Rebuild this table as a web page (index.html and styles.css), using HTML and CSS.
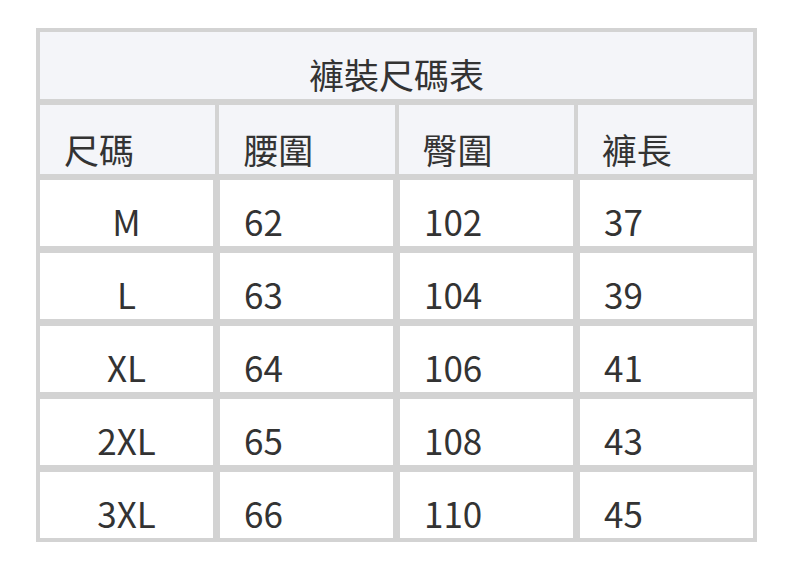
FILE: index.html
```html
<!DOCTYPE html>
<html lang="zh-Hant">
<head>
<meta charset="utf-8">
<title>褲裝尺碼表</title>
<link rel="stylesheet" href="styles.css">
</head>
<body>
<div class="size-table">
  <div class="row title-row"><div class="cell title">褲裝尺碼表</div></div>
  <div class="row head-row">
    <div class="cell head">尺碼</div>
    <div class="cell head">腰圍</div>
    <div class="cell head">臀圍</div>
    <div class="cell head">褲長</div>
  </div>
  <div class="row body-row">
    <div class="cell size">M</div><div class="cell">62</div><div class="cell">102</div><div class="cell">37</div>
  </div>
  <div class="row body-row">
    <div class="cell size">L</div><div class="cell">63</div><div class="cell">104</div><div class="cell">39</div>
  </div>
  <div class="row body-row">
    <div class="cell size">XL</div><div class="cell">64</div><div class="cell">106</div><div class="cell">41</div>
  </div>
  <div class="row body-row">
    <div class="cell size">2XL</div><div class="cell">65</div><div class="cell">108</div><div class="cell">43</div>
  </div>
  <div class="row body-row">
    <div class="cell size">3XL</div><div class="cell">66</div><div class="cell">110</div><div class="cell">45</div>
  </div>
</div>
</body>
</html>
```

FILE: styles.css
```css
html, body {
  margin: 0;
  padding: 0;
  background: #ffffff;
}

body {
  font-family: "Noto Sans CJK TC", "Noto Sans", sans-serif;
  color: #333333;
}

.size-table {
  box-sizing: border-box;
  width: 721px;
  margin: 28px 0 0 36px;
  padding: 4px;
  background: #d3d3d3;
  display: flex;
  flex-direction: column;
}

.row {
  display: grid;
  grid-template-columns: repeat(4, minmax(0, 1fr));
}

.title-row {
  grid-template-columns: 1fr;
  height: 67px;
}

.head-row {
  height: 69px;
  column-gap: 4px;
  margin-top: 6px;
}

.body-row {
  height: 66px;
  column-gap: 7px;
  margin-top: 7px;
}

.head-row + .body-row {
  margin-top: 6px;
}

.cell {
  display: flex;
  align-items: flex-end;
  box-sizing: border-box;
  padding-left: 24px;
  font-size: 35px;
  line-height: normal;
  background: #ffffff;
  white-space: nowrap;
}

.title,
.head {
  background: #f4f5f9;
}

.title {
  justify-content: center;
  padding-left: 0;
}

.size {
  justify-content: center;
  padding-left: 0;
}
```
